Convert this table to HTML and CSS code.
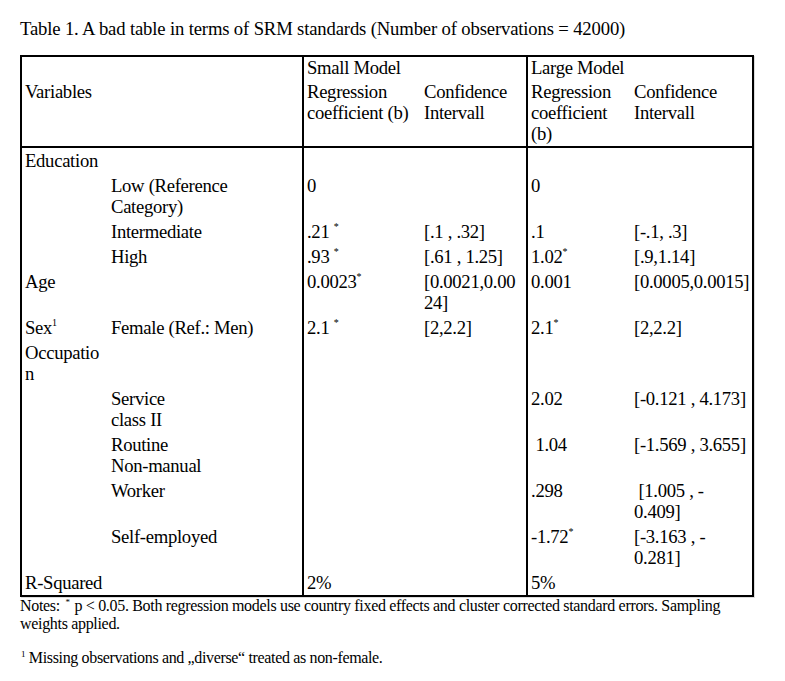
FILE: index.html
```html
<!DOCTYPE html>
<html lang="en">
<head>
<meta charset="utf-8">
<title>Table 1</title>
<link rel="stylesheet" href="styles.css">
</head>
<body>
<div class="page">
  <p class="caption">Table 1. A bad table in terms of SRM standards (Number of observations = 42000)</p>
  <table class="srm">
    <colgroup>
      <col class="c-a"><col class="c-b"><col class="c-c"><col class="c-d"><col class="c-e"><col class="c-f">
    </colgroup>
    <thead>
      <tr class="h1">
        <td colspan="2"></td>
        <td colspan="2" class="sep">Small Model</td>
        <td colspan="2" class="sep">Large Model</td>
      </tr>
      <tr class="h2">
        <td colspan="2">Variables</td>
        <td class="sep">Regression<br>coefficient (b)</td>
        <td>Confidence<br>Intervall</td>
        <td class="sep">Regression<br>coefficient<br>(b)</td>
        <td>Confidence<br>Intervall</td>
      </tr>
    </thead>
    <tbody>
      <tr class="first"><td colspan="2">Education</td><td class="sep"></td><td></td><td class="sep"></td><td></td></tr>
      <tr><td></td><td>Low (Reference<br>Category)</td><td class="sep">0</td><td></td><td class="sep">0</td><td></td></tr>
      <tr><td></td><td>Intermediate</td><td class="sep">.21 <sup>*</sup></td><td>[.1 , .32]</td><td class="sep">.1</td><td>[-.1, .3]</td></tr>
      <tr><td></td><td>High</td><td class="sep">.93 <sup>*</sup></td><td>[.61 , 1.25]</td><td class="sep">1.02<sup>*</sup></td><td>[.9,1.14]</td></tr>
      <tr><td>Age</td><td></td><td class="sep">0.0023<sup>*</sup></td><td>[0.0021,0.00<br>24]</td><td class="sep">0.001</td><td>[0.0005,0.0015]</td></tr>
      <tr><td>Sex<sup>1</sup></td><td>Female (Ref.: Men)</td><td class="sep">2.1 <sup>*</sup></td><td>[2,2.2]</td><td class="sep">2.1<sup>*</sup></td><td>[2,2.2]</td></tr>
      <tr><td>Occupatio<br>n</td><td></td><td class="sep"></td><td></td><td class="sep"></td><td></td></tr>
      <tr><td></td><td>Service<br>class II</td><td class="sep"></td><td></td><td class="sep">2.02</td><td>[-0.121 , 4.173]</td></tr>
      <tr><td></td><td>Routine<br>Non-manual</td><td class="sep"></td><td></td><td class="sep">&nbsp;1.04</td><td>[-1.569 , 3.655]</td></tr>
      <tr><td></td><td>Worker</td><td class="sep"></td><td></td><td class="sep">.298</td><td>&nbsp;[1.005 , -<br>0.409]</td></tr>
      <tr><td></td><td>Self-employed</td><td class="sep"></td><td></td><td class="sep">-1.72<sup>*</sup></td><td>[-3.163 , -<br>0.281]</td></tr>
      <tr><td colspan="2">R-Squared</td><td class="sep">2%</td><td></td><td class="sep">5%</td><td></td></tr>
    </tbody>
  </table>
  <p class="notes"><span class="ln">Notes: <sup class="mark">*</sup> p &lt; 0.05. Both regression models use country fixed effects and cluster corrected standard errors. Sampling</span><br><span class="ln">weights applied.</span></p>
  <p class="foot"><sup class="mark fm">1</sup> Missing observations and „diverse“ treated as non-female.</p>
</div>
</body>
</html>
```

FILE: styles.css
```css
html, body {
  margin: 0;
  padding: 0;
  background: #ffffff;
}

.page {
  padding: 18px 0 0 20px;
  font-family: "Liberation Serif", "Times New Roman", serif;
  color: #000000;
}

.caption {
  margin: 0 0 16px 0;
  font-size: 18.67px;
  line-height: 21px;
  letter-spacing: -0.15px;
}

.srm {
  width: 732px;
  table-layout: fixed;
  border-collapse: collapse;
  border: 2px solid #000000;
  font-size: 18.67px;
  letter-spacing: -0.3px;
  box-shadow: 1px 1px 0 #dcdcdc;
}

.c-a { width: 87px; }
.c-b { width: 195px; }
.c-c { width: 118px; }
.c-d { width: 106px; }
.c-e { width: 104px; }
.c-f { width: 122px; }

.srm td {
  padding: 1.5px 0 2.5px 3px;
  line-height: 21px;
  vertical-align: top;
  white-space: nowrap;
  overflow: visible;
}

.srm td.sep {
  border-left: 2px solid #000000;
}

.srm .h1 td {
  padding-top: 0;
  padding-bottom: 3px;
}

.srm .h2 td {
  padding-top: 0;
  padding-bottom: 2px;
  border-bottom: 2px solid #000000;
}

.srm sup {
  font-size: 10px;
  line-height: 0;
  vertical-align: 8px;
}

.notes {
  margin: 0;
  font-size: 16px;
  line-height: 18px;
  letter-spacing: -0.32px;
  white-space: nowrap;
}

.mark {
  font-size: 9px;
  line-height: 0;
  vertical-align: 6px;
  margin: 0 1px 0 2px;
}

.mark.fm {
  margin: 0 0 0 1px;
}

.foot {
  margin: 16px 0 0 0;
  font-size: 16px;
  line-height: 18px;
  letter-spacing: -0.35px;
}
```
